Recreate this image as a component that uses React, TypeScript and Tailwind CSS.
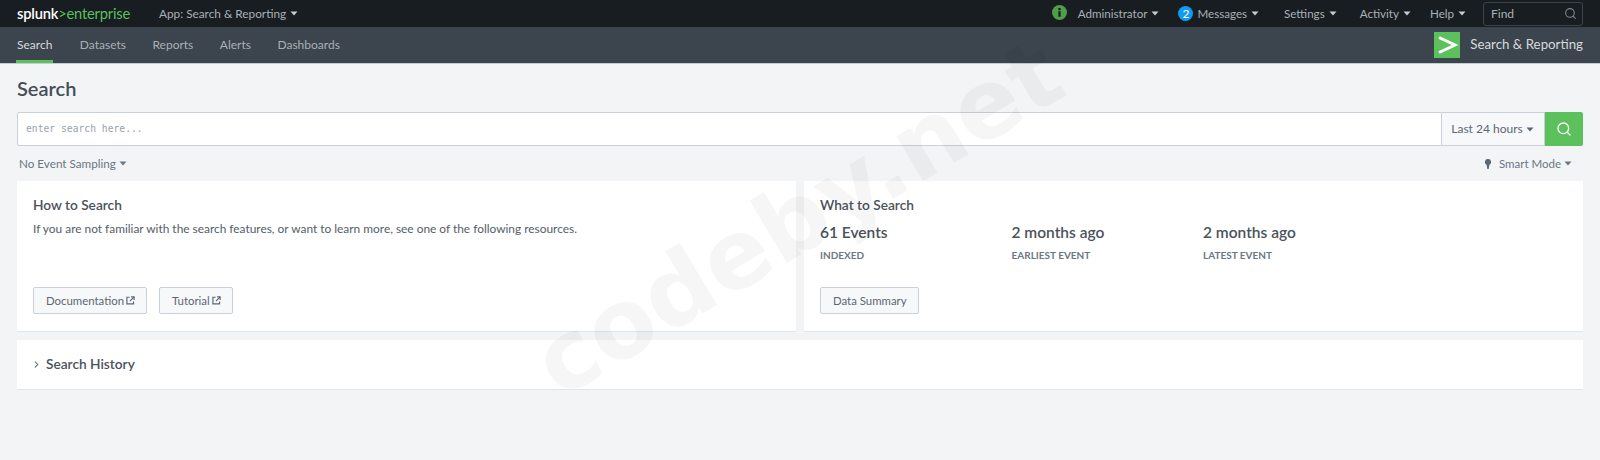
import { Search, ChevronRight } from "lucide-react";

const font = "font-['Lato','Open_Sans',sans-serif]";

function Caret({ className = "" }: { className?: string }) {
  return (
    <svg width="8" height="5" viewBox="0 0 8 5" className={`inline-block ${className}`}>
      <path d="M0.5 0.5h7L4 4.5z" fill="currentColor" />
    </svg>
  );
}

function TopItem({ label }: { label: string }) {
  return (
    <span className="flex items-center gap-[4px] text-[11.6px] text-[#a9b0b7]">
      {label}
      <Caret className="text-[#c3cbd4]" />
    </span>
  );
}

function ExternalIcon() {
  return (
    <svg width="9" height="9" viewBox="0 0 10 10" fill="none" stroke="currentColor" strokeWidth="1.3">
      <path d="M4 1.4H1v7.4h7.4V6" />
      <path d="M5.6 1H9v3.4" />
      <path d="M9 1 4.4 5.6" />
    </svg>
  );
}

function LinkButton({ label, external }: { label: string; external?: boolean }) {
  return (
    <button className="flex h-[27px] items-center gap-[2px] rounded-[2px] border border-[#c9d0d8] bg-[#f7f8fa] pl-3 pr-[11px] text-[11.4px] text-[#5c6773]">
      {label}
      {external && <ExternalIcon />}
    </button>
  );
}

function Stat({ value, label }: { value: string; label: string }) {
  return (
    <div className="w-[191.5px]">
      <div className="text-[15.5px] font-semibold leading-[20px] text-[#4a525c]">{value}</div>
      <div className="mt-[6px] text-[10px] font-bold leading-[14px] text-[#6b7785]">{label}</div>
    </div>
  );
}

export default function App() {
  return (
    <div className={`relative h-[460px] w-[1600px] overflow-hidden bg-[#f2f4f5] ${font}`}>
      {/* top bar */}
      <div className="flex h-[27px] items-center justify-between bg-[#171d21] px-[17px]">
        <div className="flex items-center">
          <span className="w-[142px] text-[14.7px] leading-none tracking-[-0.2px]">
            <span className="font-semibold text-white">splunk</span>
            <span className="text-[#5cc05c]">&gt;enterprise</span>
          </span>
          <span className="flex items-center gap-[4px] text-[11.8px] text-[#a9b0b7]">
            App: Search &amp; Reporting
            <Caret className="text-[#c3cbd4]" />
          </span>
        </div>
        <div className="flex items-center">
          <svg width="15" height="15" viewBox="0 0 15 15" className="mr-[11px] mb-[3px]">
            <circle cx="7.5" cy="7.5" r="7.5" fill="#4f9e4a" />
            <rect x="6.4" y="3" width="2.2" height="2.2" fill="#171d21" />
            <rect x="6.4" y="6.2" width="2.2" height="5.6" fill="#171d21" />
          </svg>
          <TopItem label="Administrator" />
          <span className="ml-[19px] mr-[4px] flex h-[15px] w-[15px] items-center justify-center rounded-full bg-[#0f9cf0] text-[12px] text-white">
            2
          </span>
          <TopItem label="Messages" />
          <span className="w-[25px]" />
          <TopItem label="Settings" />
          <span className="w-[23px]" />
          <TopItem label="Activity" />
          <span className="w-[19px]" />
          <TopItem label="Help" />
          <div className="ml-[17px] flex h-[24px] w-[100px] items-center justify-between rounded-[3px] border border-[#3c444d] pl-[7px] pr-[5px] text-[12px] text-[#a9b0b7]">
            Find
            <Search size={13} className="text-[#7d8690]" />
          </div>
        </div>
      </div>

      {/* app bar */}
      <div className="flex h-[37px] items-stretch justify-between border-b border-[#c3cbd4] bg-[#3c444d] pl-[16px] pr-[17px]">
        <nav className="flex items-stretch gap-[26.5px] text-[12px] text-[#a9b0b7]">
          <span className="flex items-center border-b-[3px] border-[#5cc05c] px-[1px] pt-[3px] text-[#d5dadf]">Search</span>
          <span className="flex items-center">Datasets</span>
          <span className="flex items-center">Reports</span>
          <span className="flex items-center">Alerts</span>
          <span className="flex items-center">Dashboards</span>
        </nav>
        <div className="flex items-center gap-[10px]">
          <svg width="26" height="26" viewBox="0 0 26 26">
            <rect width="26" height="26" fill="#5cc05c" />
            <path d="M5 5.5 21 13 5 20.5" fill="none" stroke="#fff" strokeWidth="3" />
          </svg>
          <span className="text-[13.3px] text-[#d5dadf]">Search &amp; Reporting</span>
        </div>
      </div>

      {/* page */}
      <div className="px-[17px]">
        <h1 className="pt-[12px] text-[20px] font-semibold leading-[25px] text-[#454e59]">Search</h1>

        <div className="mt-[11px] flex h-[34px] items-stretch">
          <div className="flex flex-1 items-center rounded-l-[2px] border border-[#c9d0d8] bg-white pl-[8px] font-['DejaVu_Sans_Mono',monospace] text-[9.7px] text-[#9aa2ab]">
            enter search here...
          </div>
          <div className="flex w-[103px] items-center justify-center gap-[3px] border-y border-r border-[#c9d0d8] bg-[#f7f8fa] pr-[1px] text-[12px] text-[#5c6773]">
            Last 24 hours
            <Caret />
          </div>
          <div className="flex w-[38px] items-center justify-center rounded-r-[2px] bg-[#5cc05c] text-white">
            <Search size={16} strokeWidth={2} />
          </div>
        </div>

        <div className="flex h-[35px] items-center justify-between pl-[2px] pr-[11px] text-[11.7px] text-[#6b7785]">
          <span className="flex items-center gap-[3px]">
            No Event Sampling
            <Caret />
          </span>
          <span className="flex items-center gap-[3px] text-[11.5px]">
            <svg width="8" height="10" viewBox="0 0 8 10" className="mr-[4px]">
              <path d="M4 0a3 3 0 0 1 1.4 5.7L4.7 10H3.3l-.7-4.3A3 3 0 0 1 4 0z" fill="#5c6773" />
            </svg>
            Smart Mode
            <Caret />
          </span>
        </div>

        <div className="flex gap-[8px]">
          <section className="flex h-[151px] flex-1 flex-col border-b border-[#e1e6eb] bg-white px-[16px] pt-[15px]">
            <h2 className="text-[13.7px] font-semibold leading-[18px] text-[#4a525c]">How to Search</h2>
            <p className="mt-[6px] text-[11.9px] leading-[18px] text-[#555e69]">
              If you are not familiar with the search features, or want to learn more, see one of the following resources.
            </p>
            <div className="mt-[49px] flex gap-[12px]">
              <LinkButton label="Documentation" external />
              <LinkButton label="Tutorial" external />
            </div>
          </section>
          <section className="flex h-[151px] flex-1 flex-col border-b border-[#e1e6eb] bg-white px-[16px] pt-[15px]">
            <h2 className="text-[13.7px] font-semibold leading-[18px] text-[#4a525c]">What to Search</h2>
            <div className="mt-[8px] flex">
              <Stat value="61 Events" label="INDEXED" />
              <Stat value="2 months ago" label="EARLIEST EVENT" />
              <Stat value="2 months ago" label="LATEST EVENT" />
            </div>
            <div className="mt-[25px] flex">
              <LinkButton label="Data Summary" />
            </div>
          </section>
        </div>

        <section className="mt-[8px] flex h-[50px] items-center gap-[4px] border-b border-[#e1e6eb] bg-white pl-[14px] text-[13.7px] font-semibold text-[#4a525c]">
          <ChevronRight size={11} strokeWidth={2.2} />
          Search History
        </section>
      </div>

      {/* watermark */}
      <div className="pointer-events-none absolute left-[798px] top-[218px] -translate-x-1/2 -translate-y-1/2 -rotate-[31deg] whitespace-nowrap font-['DejaVu_Sans',sans-serif] text-[96px] font-bold leading-none text-black/[0.035]">
        codeby.net
      </div>
    </div>
  );
}
